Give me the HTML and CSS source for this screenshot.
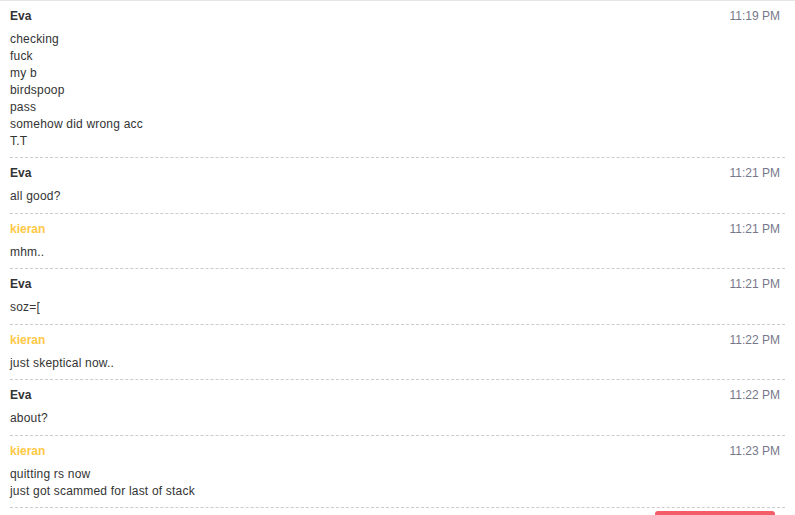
FILE: index.html
```html
<!DOCTYPE html>
<html>
<head>
<meta charset="utf-8">
<link rel="stylesheet" href="styles.css">
</head>
<body>
<div class="log">
  <div class="msg">
    <div class="head"><span class="name">Eva</span><span class="time">11:19 PM</span></div>
    <div class="body">checking<br>fuck<br>my b<br>birdspoop<br>pass<br>somehow did wrong acc<br>T.T</div>
  </div>
  <div class="msg">
    <div class="head"><span class="name">Eva</span><span class="time">11:21 PM</span></div>
    <div class="body">all good?</div>
  </div>
  <div class="msg">
    <div class="head"><span class="name other">kieran</span><span class="time">11:21 PM</span></div>
    <div class="body">mhm..</div>
  </div>
  <div class="msg">
    <div class="head"><span class="name">Eva</span><span class="time">11:21 PM</span></div>
    <div class="body">soz=[</div>
  </div>
  <div class="msg">
    <div class="head"><span class="name other">kieran</span><span class="time">11:22 PM</span></div>
    <div class="body">just skeptical now..</div>
  </div>
  <div class="msg">
    <div class="head"><span class="name">Eva</span><span class="time">11:22 PM</span></div>
    <div class="body">about?</div>
  </div>
  <div class="msg">
    <div class="head"><span class="name other">kieran</span><span class="time">11:23 PM</span></div>
    <div class="body">quitting rs now<br>just got scammed for last of stack</div>
  </div>
  <div class="footer"><div class="bar"></div></div>
</div>
</body>
</html>
```
FILE: styles.css
```css
html, body {
  margin: 0;
  padding: 0;
  background: #ffffff;
  overflow: hidden;
}
body {
  font-family: "Liberation Sans", Arial, sans-serif;
  font-size: 12px;
  color: #333333;
}
.log {
  border-top: 1px solid #e6e6e6;
}
.msg {
  margin: 0 10px;
  padding: 7px 5px 7.5px 0;
  border-bottom: 1px dashed #cccccc;
}
.msg:first-child {
  padding-top: 6.5px;
}
.head {
  display: flex;
  justify-content: space-between;
  line-height: 17px;
  margin-bottom: 6px;
}
.name {
  font-weight: bold;
  color: #333333;
}
.name.other {
  color: #ffc845;
}
.time {
  color: #77778a;
}
.body {
  line-height: 17px;
  letter-spacing: 0.2px;
}
.footer {
  display: flex;
  justify-content: flex-end;
  padding: 3px 20px 0 0;
}
.bar {
  width: 120px;
  height: 6px;
  background: #f45d68;
  border-radius: 3px 3px 0 0;
}
```
